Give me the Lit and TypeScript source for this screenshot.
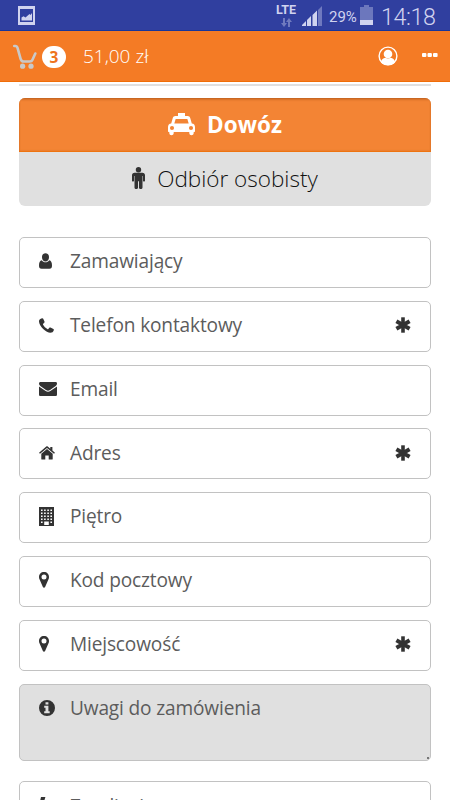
import { LitElement, html, svg, css } from "lit";
import { customElement, property } from "lit/decorators.js";

const icons: Record<string, { w: number; h: number; art: unknown }> = {
  user: { w: 13, h: 16, art: svg`<path d="M3 4.200C3 1.700 4.400.2 6.500.2S10 1.700 10 4.200 8.600 8.400 6.500 8.400 3 6.700 3 4.200zM2.800 7.200C.8 7.500 0 9.500 0 12.500 0 14.800.8 15.700 2.500 15.700h8c1.700 0 2.500-.9 2.500-3.200 0-3-.8-5-2.800-5.300C9.200 8.600 8 9.300 6.500 9.300S3.800 8.600 2.800 7.200z"/>` },
  phone: { w: 15, h: 15, art: svg`<path d="M1.300.9 3 .2c.6-.2.9 0 1.200.6l1.300 2.800c.2.6 0 .9-.4 1.300l-1 .9c-.3.300-.2.600 0 1 1.100 1.900 2.300 3.100 4.200 4.200.4.200.7.300 1 0l1-1.200c.4-.4.700-.5 1.200-.2l2.900 1.500c.5.300.600.600.400 1.200-.5 1.700-1.700 2.500-3.500 2.500C7.500 14.800 0 8.300 0 3.500 0 2.200.4 1.300 1.300.9z"/>` },
  mail: { w: 18, h: 14, art: svg`<path d="M1.500 0h15C17.500 0 18 .6 18 1.400 18 2.700 17 3.800 16 4.500l-5 3.400c-1.500 1-2.500 1-4 0L2 4.500C1 3.800 0 2.700 0 1.500 0 .6.600 0 1.500 0zM0 4.500 6.300 8.800c2.100 1.400 3.300 1.400 5.400 0L18 4.500v7.900c0 1-.6 1.600-1.600 1.600H1.600C.6 14 0 13.400 0 12.400z"/>` },
  home: { w: 16, h: 14, art: svg`<path d="m8 3 5.700 4.700v5.200c0 .4-.3.700-.7.700H9.700V9.500H6.300v4.100H3c-.4 0-.7-.3-.7-.7V7.700zM7.300.500c.5-.4.900-.4 1.400 0l2.600 2.200V1h2.100v3.400l2.300 2c.2.200.2.300.1.500l-.5.600c-.2.200-.4.200-.6 0L8 2 1.300 7.500c-.2.200-.4.200-.6 0l-.5-.6c-.1-.2-.1-.3.100-.5z"/>` },
  building: { w: 15, h: 19, art: svg`<path fill-rule="evenodd" d="M0 0h15v19H0zM2 2.500v1.600h1.600V2.500zm3.100 0v1.600h1.600V2.500zm3.200 0v1.600h1.600V2.500zm3.100 0v1.600H13V2.500zM2 5.500v1.600h1.600V5.500zm3.100 0v1.600h1.600V5.500zm3.200 0v1.600h1.600V5.500zm3.100 0v1.600H13V5.500zM2 8.500v1.600h1.600V8.500zm3.100 0v1.600h1.600V8.500zm3.200 0v1.600h1.600V8.500zm3.100 0v1.600H13V8.500zM2 11.500v1.600h1.600v-1.600zm3.100 0v1.600h1.600v-1.600zm3.200 0v1.600h1.600v-1.600zm3.100 0v1.600H13v-1.600zM2 14.500v1.600h1.600v-1.600zm9.400 0v1.600H13v-1.600zM5.200 14.500V18h4.600v-3.500z"/>` },
  pin: { w: 10, h: 16, art: svg`<path fill-rule="evenodd" d="M5 0c3 0 5 2.100 5 5 0 .9-.1 1.500-.5 2.200L6.100 15c-.4.900-1.800.9-2.200 0L.5 7.200C.1 6.500 0 5.900 0 5c0-2.900 2-5 5-5zm0 2.500a2.500 2.500 0 1 0 0 5 2.500 2.500 0 0 0 0-5z"/>` },
  info: { w: 16, h: 16, art: svg`<path fill-rule="evenodd" d="M8 0a8 8 0 1 0 0 16A8 8 0 0 0 8 0zM6.500 2.200h2.900v2.300H6.500zM5.200 5.800h4.200V11.300h1.300v2H5.200v-2h1.300V7.800H5.200z"/>` },
  bolt: { w: 10, h: 17, art: svg`<path d="M2 0h4.400L4.900 5l4.400-1.100c.5 0 .8.300.6.700L4.200 16.400 3 16l2-7.500-4.300 1.100C.2 9.700-.1 9.400 0 9z"/>` },
  star: { w: 16, h: 16, art: svg`<g stroke="currentColor" stroke-width="4"><path d="M8 .3v15.400" stroke-width="3.600"/><path d="M1.400 4.300l13.200 7.400M14.600 4.300 1.400 11.700"/></g>` },
  taxi: { w: 27, h: 23, art: svg`<path fill-rule="evenodd" d="M10 0h7v3h2.500c1.500 0 2.400.8 2.800 2.200L23.800 10.500c2.100.2 3.200 1.500 3.200 3.500v4.300c0 .5-.2.700-.7.700h-.6v1.100c0 3-4.400 3-4.400 0V19H5.700v1.100c0 3-4.400 3-4.400 0V19H.7c-.5 0-.7-.2-.7-.7V14c0-2 1.100-3.300 3.200-3.500L4.700 5.200C5.100 3.800 6 3 7.500 3H10zM7.500 6.500 6.300 10.500h14.400L19.500 6.500c-.1-.4-.2-.5-.6-.5H8.100c-.4 0-.5.1-.6.500zM4 13a2 2 0 1 0 0 4.100A2 2 0 0 0 4 13zm19 0a2 2 0 1 0 0 4.100A2 2 0 0 0 23 13z"/>` },
  man: { w: 13, h: 22, art: svg`<circle cx="6.500" cy="2.700" r="2.700"/><path d="M2.500 5.800h8c1.500 0 2.500 1 2.500 2.500v5.200c0 1.500-2 1.500-2 0V9h-.5v11.500c0 2-3.500 2-3.500 0v-6.300H6v6.300c0 2-3.500 2-3.500 0V9H2v4.500c0 1.500-2 1.500-2 0V8.300c0-1.500 1-2.500 2.500-2.500z"/>` },
  cart: { w: 24, h: 25, art: svg`<path d="M1.200 2h1.100c1.500 0 1.900.7 2.300 2.100l3 10.700c.6 2 1.300 2.700 3 2.700h6.200c1.500 0 2.200-.5 2.700-1.800L22.300 9.500" fill="none" stroke="currentColor" stroke-width="2.600" stroke-linecap="round"/><circle cx="9.600" cy="22.200" r="2.600"/><circle cx="18" cy="22.200" r="2.600"/>` },
  account: { w: 20, h: 20, art: svg`<circle cx="10" cy="10" r="8.900" fill="none" stroke="currentColor" stroke-width="1.400"/><circle cx="10" cy="8" r="4.300"/><path d="M3 16.500c.4-3.200 2.200-4.600 4.400-4.800 1.500 1.100 3.700 1.100 5.200 0 2.200.2 4 1.600 4.400 4.800-3 3.600-11 3.600-14 0z"/>` },
  dots: { w: 16, h: 4, art: svg`<rect width="4.400" height="4" rx="1"/><rect x="5.500" width="4.400" height="4" rx="1"/><rect x="11" width="4.600" height="4" rx="1"/>` },
  picture: { w: 17, h: 19, art: svg`<path fill-rule="evenodd" d="M0 0h17v19H0zM2 3v13h13V3z"/><path d="M3.500 14.500v-3l2-1.200 2 1.200 4-3.500 1 1L14 7v7.500z"/>` },
  arrows: { w: 11, h: 9, art: svg`<path d="M2 0h2v5h2L3 9 0 5h2zM7 9V4H5l3-4 3 4H9v5z"/>` },
  signal: { w: 20, h: 20, art: svg`<path d="M0 20v-1l4-4v5zM5 20v-6l4-4v10zM10.500 20V9L15 4.500V20z"/><path opacity=".4" d="M16 20V4l4-4v20z"/>` },
  battery: { w: 13, h: 20, art: svg`<path opacity=".38" d="M4 0h5v2h4v13H0V2h4z"/><path d="M0 15h13v5H0z"/>` },
};

@customElement("ui-icon")
class UiIcon extends LitElement {
  @property() name = "user";
  static styles = css`:host { display: block; flex: none; } svg { display: block; fill: currentColor; }`;
  render() {
    const i = icons[this.name];
    return html`<svg width=${i.w} height=${i.h} viewBox="0 0 ${i.w} ${i.h}">${i.art}</svg>`;
  }
}

@customElement("form-field")
class FormField extends LitElement {
  @property() icon = "user";
  @property() label = "";
  @property({ type: Boolean }) required = false;
  @property({ type: Boolean, reflect: true }) area = false;
  static styles = css`
    :host { display: flex; box-sizing: border-box; height: 51px; margin-bottom: 12.800px; padding: 0 19.500px 2.500px 18.800px;
      border: 1.300px solid #c2c2c2; border-radius: 5px; align-items: center; background: #fff; color: #333; position: relative; }
    :host([area]) { height: 77.500px; margin-bottom: 20px; padding-bottom: 29px; background: #e0e0e0; }
    .slot { width: 31.200px; flex: none; }
    .label { flex: 1; font-size: 19.100px; font-weight: 370; letter-spacing: -.15px; line-height: 28px; color: #5c5c5c; white-space: nowrap; }
    .grip { position: absolute; right: 1px; bottom: 1px; width: 2px; height: 2px; background: #777; }
  `;
  render() {
    return html`<ui-icon class="slot" name=${this.icon}></ui-icon><span class="label">${this.label}</span>
      ${this.required ? html`<ui-icon name="star"></ui-icon>` : ""}
      ${this.area ? html`<span class="grip"></span>` : ""}`;
  }
}

@customElement("app-root")
class AppRoot extends LitElement {
  static styles = css`
    :host { display: block; height: 800px; overflow: hidden; background: #fff; font-family: "Open Sans", sans-serif; }
    .status { height: 31px; box-sizing: border-box; background: #303f9f; color: #d0d3ef; display: flex; align-items: flex-start; padding: 0 14px 0 18px; font-family: Roboto, sans-serif; border-bottom: 1px solid #17359a; }
    .pic { margin-top: 6px; margin-right: auto; }
    .net { width: 22px; margin-right: 5px; display: flex; flex-direction: column; align-items: center; }
    .lte { font-size: 12.500px; font-weight: 700; line-height: 14px; margin-top: 3px; }
    .arr { opacity: .4; margin-top: 1px; }
    .sig { margin-top: 6px; margin-right: 7px; }
    .pct { font-size: 15px; line-height: 18px; margin-top: 8px; width: 27px; margin-right: 4px; white-space: nowrap; }
    .bat { margin-top: 5px; margin-right: 8px; }
    .time { font-size: 23.300px; line-height: 26px; margin-top: 4px; width: 55px; white-space: nowrap; font-weight: 350; letter-spacing: -.4px; }
    .bar { height: 51px; box-sizing: border-box; background: #f47b25; color: #fff; display: flex; align-items: center; padding: 0 12px 0 13px; border-bottom: 1px solid #f06d08; }
    .cart { color: #c9c9c9; margin-top: 1px; }
    .badge { width: 24px; height: 22px; border-radius: 11px; background: #fff; color: #ee7420; font-weight: 700; font-size: 15.500px; line-height: 22px; text-align: center; margin: 1px 17px 0 5px; }
    .sum { font-size: 19px; font-weight: 300; margin-right: auto; }
    .acc { margin-right: 24px; margin-top: -1px; }
    .more { margin-top: -2px; }
    .body { padding: 2px 19px 0; }
    .rule { height: 2px; background: #e0e0e0; margin-bottom: 12px; }
    .choice { height: 108px; border-radius: 6px; overflow: hidden; background: #e0e0e0; margin-bottom: 31px; }
    .opt { height: 54px; display: flex; justify-content: center; align-items: center; box-sizing: border-box; font-size: 22.500px; color: #333; }
    .on { background: #f38434; color: #fff; font-weight: 700; border-bottom: 1px solid #ee7310; box-shadow: inset 0 2px 3px -1px #b65c1c, inset 0 0 2px #d9701f; gap: 12px; padding-bottom: 1px; }
    .off { font-weight: 300; gap: 12px; padding-bottom: 2px; }
    .off span { color: #111; }
    .last { padding-bottom: 1.500px; }
  `;
  render() {
    return html`
      <div class="status">
        <ui-icon class="pic" name="picture"></ui-icon>
        <div class="net"><span class="lte">LTE</span><ui-icon class="arr" name="arrows"></ui-icon></div>
        <ui-icon class="sig" name="signal"></ui-icon><span class="pct">29%</span>
        <ui-icon class="bat" name="battery"></ui-icon><span class="time">14:18</span>
      </div>
      <div class="bar">
        <ui-icon class="cart" name="cart"></ui-icon><span class="badge">3</span><span class="sum">51,00 zł</span>
        <ui-icon class="acc" name="account"></ui-icon><ui-icon class="more" name="dots"></ui-icon>
      </div>
      <div class="body">
        <div class="rule"></div>
        <div class="choice">
          <div class="opt on"><ui-icon name="taxi"></ui-icon><span>Dowóz</span></div>
          <div class="opt off"><ui-icon name="man"></ui-icon><span>Odbiór osobisty</span></div>
        </div>
        <form-field icon="user" label="Zamawiający"></form-field>
        <form-field icon="phone" label="Telefon kontaktowy" required></form-field>
        <form-field icon="mail" label="Email"></form-field>
        <form-field icon="home" label="Adres" required></form-field>
        <form-field icon="building" label="Piętro"></form-field>
        <form-field icon="pin" label="Kod pocztowy"></form-field>
        <form-field icon="pin" label="Miejscowość" required></form-field>
        <form-field icon="info" label="Uwagi do zamówienia" area></form-field>
        <form-field class="last" icon="bolt" label="Zrealizuj"></form-field>
      </div>`;
  }
}
